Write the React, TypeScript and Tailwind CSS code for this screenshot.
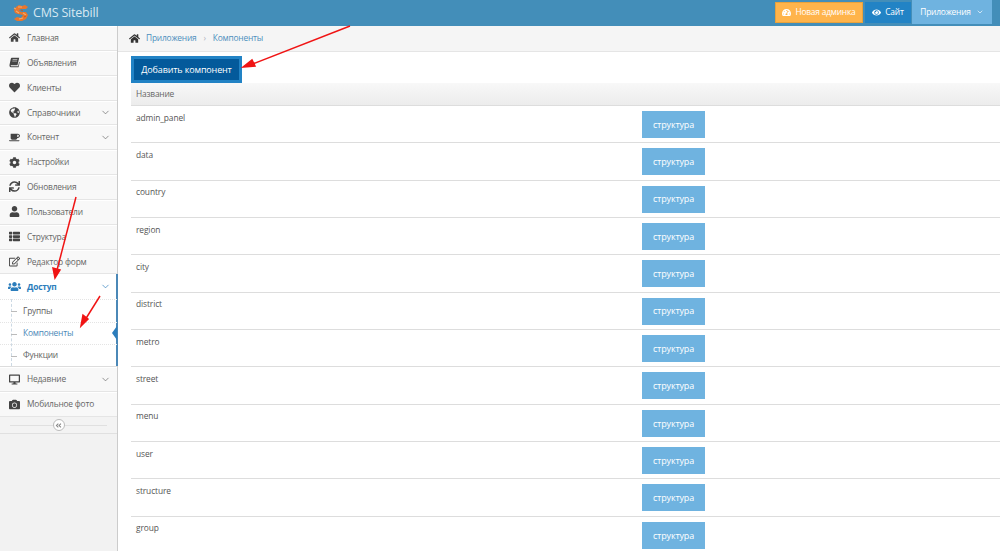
import { FaHome, FaHeart, FaGlobeAmericas, FaCoffee, FaCog, FaSync, FaUser, FaThList, FaRegEdit, FaUsers, FaDesktop, FaCamera, FaEye, FaAngleDoubleLeft, FaTachometerAlt } from 'react-icons/fa';
import { ChevronDown } from 'lucide-react';
import type { IconType } from 'react-icons';

// fa4 style skewed book, fa5's one is upright
const BookIcon: IconType = ({ className }) => (
  <svg viewBox="0 0 14 14" width="1em" height="1em" className={className}>
    <path d="M3.5 1H13L10.8 10.5H2.6C2 10.5 1.9 11.8 2.7 11.8H11.6L12.9 6.2L13.6 6.6L12.2 13H2.4C1 13 .4 11.6.7 10L2.3 2.2C2.5 1.5 3 1 3.5 1Z" fill="currentColor" />
    <path d="M4.6 3.2H10.6M4.2 5.2H10.2" stroke="#f8f8f8" strokeWidth=".7" />
  </svg>
);

type MenuItem = { label: string; icon: IconType; chevron?: boolean };

const topMenu: MenuItem[] = [
  { label: 'Главная', icon: FaHome },
  { label: 'Объявления', icon: BookIcon },
  { label: 'Клиенты', icon: FaHeart },
  { label: 'Справочники', icon: FaGlobeAmericas, chevron: true },
  { label: 'Контент', icon: FaCoffee, chevron: true },
  { label: 'Настройки', icon: FaCog },
  { label: 'Обновления', icon: FaSync },
  { label: 'Пользователи', icon: FaUser },
  { label: 'Структура', icon: FaThList },
  { label: 'Редактор форм', icon: FaRegEdit },
];

const bottomMenu: MenuItem[] = [
  { label: 'Недавние', icon: FaDesktop, chevron: true },
  { label: 'Мобильное фото', icon: FaCamera },
];

const subMenu = ['Группы', 'Компоненты', 'Функции'];

const rows = ['admin_panel', 'data', 'country', 'region', 'city', 'district', 'metro', 'street', 'menu', 'user', 'structure', 'group'];

const SideItem = ({ item }: { item: MenuItem }) => {
  const Icon = item.icon;
  return (
    <div className="flex h-[24.85px] items-center border-b border-[#e5e5e5] bg-[#f8f8f8] pr-[6px] shadow-[inset_0_1px_0_#fff]">
      <div className="flex w-[27px] justify-center pl-[1px]">
        <Icon className="text-[11px] text-[#444]" />
      </div>
      <span className="flex-1 pt-[1px] text-[8.4px] tracking-[-0.2px] text-[#666]">{item.label}</span>
      {item.chevron && <ChevronDown size={11} strokeWidth={1.5} className="text-[#666]" />}
    </div>
  );
};

const Logo = () => (
  <svg width="18" height="18" viewBox="0 0 18 18" className="mr-[3px]">
    <path d="M4 3L7 1L10 2L13 1L16 3L14 5L9 5L7 6L9 8L14 8L16 11L14 15L10 17L5 17L2 15L5 13L9 14L11 11L6 10L3 9L2 6Z" fill="#e8762d" />
    <path d="M6 3L10 3M4 7L7 9M11 9L14 11M7 15L11 14M2 4L4 5" stroke="#f4a868" strokeWidth="1.1" fill="none" />
    <path d="M12 13L14 12M9 6L11 7" stroke="#c95a1c" strokeWidth="1" fill="none" />
  </svg>
);

export default function App() {
  return (
    <div className="relative h-[551px] w-[1000px] overflow-hidden bg-white font-['Open_Sans',sans-serif]">
      <header className="flex h-[26px] items-center bg-[#438eb9] pl-[12px]">
        <Logo />
        <span className="text-[12.5px] tracking-[-0.2px] text-[#d8e8f2]">CMS Sitebill</span>
        <div className="ml-auto flex h-full items-start">
          <div className="mt-[2px] flex h-[21px] w-[88px] items-center justify-center gap-[4px] border border-[#e8a23c] bg-[#ffb44b] text-[8.4px] tracking-[-0.2px] text-white">
            <FaTachometerAlt className="text-[9px]" />
            Новая админка
          </div>
          <div className="mt-[2px] ml-[2px] flex h-[21px] w-[46px] items-center justify-center gap-[4px] bg-[#2283c5] text-[8.4px] tracking-[-0.2px] text-white">
            <FaEye className="text-[9px]" />
            Сайт
          </div>
          <div className="ml-[1px] flex h-[24px] w-[80px] items-center justify-center gap-[5px] bg-[#6fb3e0] text-[8.4px] tracking-[-0.2px] text-white">
            Приложения
            <ChevronDown size={8} strokeWidth={2} />
          </div>
          <div className="w-[8px]" />
        </div>
      </header>

      <div className="flex h-[525px]">
        <aside className="h-full w-[118px] shrink-0 border-r border-[#ccc] bg-[#f2f2f2]">
          {topMenu.map((item) => (
            <SideItem key={item.label} item={item} />
          ))}

          <div className="relative border-b border-[#ddd] bg-white">
            <div className="absolute top-0 right-[-1px] bottom-0 w-[2px] bg-[#4b88b7]" />
            <div className="flex h-[25px] items-center pr-[6px]">
              <div className="flex w-[27px] justify-center pl-[1px]">
                <FaUsers className="text-[13px] text-[#2b7dbc]" />
              </div>
              <span className="flex-1 text-[8.4px] font-bold tracking-[-0.2px] text-[#2b7dbc]">Доступ</span>
              <ChevronDown size={11} strokeWidth={1.5} className="text-[#2b7dbc]" />
            </div>
            <div className="relative">
              <div className="absolute top-0 bottom-0 left-[11px] border-l border-dashed border-[#ccd9e4]" />
              {subMenu.map((label) => (
                <div
                  key={label}
                  className={`relative flex h-[22.3px] items-center border-t border-dotted border-[#e4e4e4] pl-[23px] text-[8.4px] tracking-[-0.2px] ${label === 'Компоненты' ? 'text-[#4b88b7]' : 'text-[#616161]'}`}
                >
                  <div className="absolute left-[11px] top-[11px] w-[6px] border-t border-dashed border-[#bbb]" />
                  {label}
                </div>
              ))}
            </div>
            <div className="absolute top-[52px] right-0 h-0 w-0 border-y-[7px] border-r-[5px] border-y-transparent border-r-[#2b7dbc]" />
          </div>

          {bottomMenu.map((item) => (
            <SideItem key={item.label} item={item} />
          ))}

          <div className="relative flex h-[17px] items-center justify-center border-b border-[#e0e0e0] bg-[#f3f3f3]">
            <div className="absolute right-[10px] left-[10px] border-t border-[#e0e0e0]" />
            <div className="relative flex h-[12px] w-[12px] items-center justify-center rounded-full border border-[#bbb] bg-white">
              <FaAngleDoubleLeft className="text-[7px] text-[#888]" />
            </div>
          </div>
        </aside>

        <main className="min-w-0 flex-1">
          <div className="flex h-[26px] items-center border-b border-[#e5e5e5] bg-[#f5f5f5] pb-[1px] pl-[11px] text-[8.4px] tracking-[-0.2px] text-[#4c8fbd]">
            <FaHome className="mr-[6px] text-[11px] text-[#333]" />
            <span>Приложения</span>
            <span className="mx-[7px] text-[#b2b6bf]">›</span>
            <span>Компоненты</span>
          </div>

          <div className="pl-[13px]">
            <button className="mt-[4px] flex h-[27px] w-[111px] items-center justify-center border-[3px] border-[#2283c5] bg-[#045a9b] text-[9px] tracking-[-0.15px] text-white">
              Добавить компонент
            </button>
            <div className="flex h-[23px] items-center border-b border-[#ddd] bg-gradient-to-b from-[#f8f8f8] to-[#ececec] pl-[5px] text-[8.4px] tracking-[-0.2px] text-[#666]">
              Название
            </div>
            {rows.map((name) => (
              <div key={name} className="flex h-[37.35px] border-b border-[#ddd]">
                <div className="w-[511px] shrink-0 pt-[5.5px] pl-[5px] text-[8.4px] leading-[12px] tracking-[-0.1px] text-[#555]">{name}</div>
                <div className="mt-[5px] flex h-[27px] w-[63px] items-center justify-center bg-[#6fb3e0] text-[9px] tracking-[-0.15px] text-white">
                  структура
                </div>
              </div>
            ))}
          </div>
        </main>
      </div>

      {/* red annotation arrows */}
      <svg className="pointer-events-none absolute top-0 left-0" width="1000" height="551">
        <g stroke="#f01414" strokeWidth="1.5" fill="#f01414">
          <line x1="350" y1="26" x2="250" y2="65" />
          <polygon points="243,67 252,60 255,66" />
          <line x1="76" y1="197" x2="57" y2="270" />
          <polygon points="55,278 53,268 60,270" />
          <line x1="100" y1="296" x2="85" y2="320" />
          <polygon points="81,326 83,315 88,319" />
        </g>
      </svg>
    </div>
  );
}
